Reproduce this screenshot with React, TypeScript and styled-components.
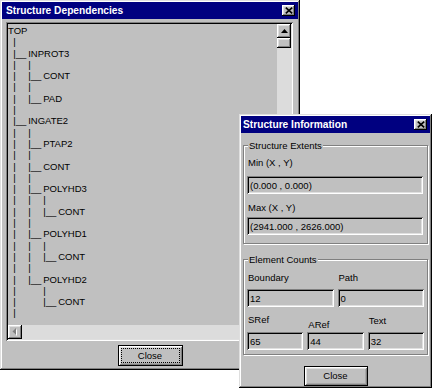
import React from 'react';
import styled, { createGlobalStyle, css } from 'styled-components';

const FACE = '#c0c0c0';

const GlobalStyle = createGlobalStyle`
  html, body { margin: 0; padding: 0; background: #fff; }
  body {
    font-family: "Liberation Sans", Arial, sans-serif;
    font-size: 9.5px;
    color: #000;
  }
  * { box-sizing: border-box; }
`;

const raised = css`
  box-shadow: inset -1px -1px 0 #000, inset 1px 1px 0 #fff,
    inset -2px -2px 0 #808080, inset 2px 2px 0 #dfdfdf;
`;

const frame = css`
  box-shadow: inset -1px -1px 0 #000, inset 1px 1px 0 #dfdfdf,
    inset -2px -2px 0 #808080, inset 2px 2px 0 #fff;
`;

const sunken = css`
  box-shadow: inset 1px 1px 0 #808080, inset -1px -1px 0 #fff,
    inset 2px 2px 0 #000, inset -2px -2px 0 #dfdfdf;
`;

const Desktop = styled.div`
  position: relative;
  width: 434px;
  height: 390px;
  background: #fff;
  overflow: hidden;
`;

const Window = styled.div<{ $x: number; $y: number; $w: number; $h: number }>`
  position: absolute;
  left: ${(p) => p.$x}px;
  top: ${(p) => p.$y}px;
  width: ${(p) => p.$w}px;
  height: ${(p) => p.$h}px;
  background: ${FACE};
  ${frame}
  padding: 2px;
  display: flex;
  flex-direction: column;
`;

const TitleBar = styled.div<{ $indent: number }>`
  flex: none;
  height: 17px;
  background: #000080;
  color: #fff;
  display: flex;
  align-items: center;
  padding: 0 3px 0 ${(p) => p.$indent}px;
  font-weight: bold;
  font-size: 10.2px;
`;

const TitleText = styled.span`
  flex: 1;
  white-space: nowrap;
`;

const CaptionButton = styled.div`
  width: 13px;
  height: 11px;
  background: ${FACE};
  ${raised}
  display: flex;
  align-items: center;
  justify-content: center;
`;

const CloseGlyph = () => (
  <svg width="8" height="7" viewBox="0 0 8 7">
    <path d="M0.8 0.6 L7.2 6.4 M7.2 0.6 L0.8 6.4" stroke="#000" strokeWidth="1.6" />
  </svg>
);

/* ---------- Structure Dependencies ---------- */

const ListBox = styled.div`
  flex: none;
  margin: 3px 0 0 4px;
  width: 287px;
  height: 319px;
  padding: 2px;
  ${sunken}
  display: grid;
  grid-template-columns: 1fr 14px;
  grid-template-rows: 1fr 14px;
`;

const TreeView = styled.div`
  overflow: hidden;
  padding-top: 1px;
`;

const TreeRow = styled.div<{ $root?: boolean }>`
  display: flex;
  height: 11.3px;
  line-height: 11.3px;
  white-space: pre;
  padding-left: ${(p) => (p.$root ? 0 : 5.2)}px;
`;

const Guide = styled.span`
  flex: none;
  width: 15px;
`;

const Branch = styled.span`
  flex: none;
  width: 15px;
`;

const Label = styled.span`
  white-space: nowrap;
`;

const VScroll = styled.div`
  display: flex;
  flex-direction: column;
  background: #dcdcdc;
`;

const HScroll = styled.div`
  display: flex;
  background: #dcdcdc;
`;

const Corner = styled.div`
  background: ${FACE};
`;

const ScrollButton = styled.div`
  flex: none;
  width: 14px;
  height: 14px;
  background: ${FACE};
  ${raised}
  display: flex;
  align-items: center;
  justify-content: center;
`;

const Thumb = styled.div`
  flex: none;
  width: 14px;
  height: 10px;
  background: ${FACE};
  ${raised}
`;

const UpArrow = () => (
  <svg width="7" height="4" viewBox="0 0 7 4">
    <path d="M3.5 0 L7 4 L0 4 Z" fill="#000" />
  </svg>
);

const LeftArrowDisabled = () => (
  <svg width="6" height="9" viewBox="0 0 6 9">
    <path d="M5 1 L5 8 L1.5 4.5 Z" fill="#fff" />
    <path d="M4 0 L4 7 L0.5 3.5 Z" fill="#808080" />
  </svg>
);

const ButtonRow = styled.div<{ $top: number }>`
  flex: none;
  display: flex;
  justify-content: center;
  margin-top: ${(p) => p.$top}px;
`;

const PushButton = styled.div<{ $w: number; $h: number }>`
  width: ${(p) => p.$w}px;
  height: ${(p) => p.$h}px;
  border: 1px solid #000;
  background: ${FACE};
  box-shadow: inset 1px 1px 0 #fff, inset -1px -1px 0 #808080,
    inset 2px 2px 0 #dfdfdf, inset -2px -2px 0 #a8a8a8;
  display: flex;
  align-items: stretch;
  justify-content: center;
  padding: 2px;
  line-height: 1;
`;

const ButtonFace = styled.span<{ $focus?: boolean }>`
  flex: 1;
  display: flex;
  align-items: center;
  justify-content: center;
  border: 1px ${(p) => (p.$focus ? 'dotted #000' : 'solid transparent')};
`;

/* ---------- Structure Information ---------- */

const DialogBody = styled.div`
  flex: 1;
  display: flex;
  flex-direction: column;
  padding: 0 2px;
`;

const Group = styled.fieldset<{ $top: number; $pad: string }>`
  flex: none;
  margin: ${(p) => p.$top}px 0 0 0;
  padding: ${(p) => p.$pad};
  min-width: 0;
  border: 1px solid #808080;
  box-shadow: 1px 1px 0 #fff, inset 1px 1px 0 #fff;
`;

const Legend = styled.legend`
  margin-left: 1px;
  padding: 0 1px;
  line-height: 11px;
  background: ${FACE};
  white-space: nowrap;
`;

const FieldLabel = styled.div<{ $before?: number; $gap: number; $drop?: number }>`
  height: ${(p) => 11 + (p.$drop ?? 0)}px;
  line-height: 11px;
  padding: ${(p) => p.$drop ?? 0}px 0 0 1px;
  margin-top: ${(p) => p.$before ?? 0}px;
  margin-bottom: ${(p) => p.$gap - (p.$drop ?? 0)}px;
  white-space: nowrap;
`;

const Field = styled.div`
  height: 18px;
  padding: 0 3px;
  ${sunken}
  display: flex;
  align-items: center;
  white-space: nowrap;
  overflow: hidden;
`;

const CountRow = styled.div<{ $cols: number; $top?: number }>`
  display: grid;
  grid-template-columns: repeat(${(p) => p.$cols}, 1fr);
  column-gap: 4px;
  margin-top: ${(p) => p.$top ?? 0}px;
`;

const Cell = styled.div`
  display: flex;
  flex-direction: column;
  min-width: 0;
`;

const TREE: Array<[string, string?]> = [
  ['', 'TOP'],
  ['v'],
  ['b', 'INPROT3'],
  ['vv'],
  ['vb', 'CONT'],
  ['vv'],
  ['vb', 'PAD'],
  ['v'],
  ['b', 'INGATE2'],
  ['vv'],
  ['vb', 'PTAP2'],
  ['vv'],
  ['vb', 'CONT'],
  ['vv'],
  ['vb', 'POLYHD3'],
  ['vvv'],
  ['vvb', 'CONT'],
  ['vv'],
  ['vb', 'POLYHD1'],
  ['vvv'],
  ['vvb', 'CONT'],
  ['vv'],
  ['vb', 'POLYHD2'],
  ['vsv'],
  ['vsb', 'CONT'],
  ['v'],
];

export default function App() {
  return (
    <>
      <GlobalStyle />
      <Desktop>
        <Window $x={0} $y={0} $w={300} $h={370}>
          <TitleBar $indent={4}>
            <TitleText>Structure Dependencies</TitleText>
            <CaptionButton>
              <CloseGlyph />
            </CaptionButton>
          </TitleBar>
          <ListBox>
            <TreeView>
              {TREE.map(([toks, label], i) => (
                <TreeRow key={i} $root={toks === ''}>
                  {toks.split('').map((t, j) =>
                    t === 'b' ? (
                      <Branch key={j}>|__</Branch>
                    ) : (
                      <Guide key={j}>{t === 'v' ? '|' : ''}</Guide>
                    )
                  )}
                  {label && <Label>{label}</Label>}
                </TreeRow>
              ))}
            </TreeView>
            <VScroll>
              <ScrollButton>
                <UpArrow />
              </ScrollButton>
              <Thumb />
            </VScroll>
            <HScroll>
              <ScrollButton>
                <LeftArrowDisabled />
              </ScrollButton>
            </HScroll>
            <Corner />
          </ListBox>
          <ButtonRow $top={4}>
            <PushButton $w={65} $h={21}>
              <ButtonFace $focus>Close</ButtonFace>
            </PushButton>
          </ButtonRow>
        </Window>

        <Window $x={239} $y={114} $w={193} $h={274}>
          <TitleBar $indent={2}>
            <TitleText>Structure Information</TitleText>
            <CaptionButton>
              <CloseGlyph />
            </CaptionButton>
          </TitleBar>
          <DialogBody>
            <Group $top={7} $pad="6px 4px 8px 3px">
              <Legend>Structure Extents</Legend>
              <FieldLabel $gap={8}>Min (X , Y)</FieldLabel>
              <Field>(0.000 , 0.000)</Field>
              <FieldLabel $before={8} $gap={4}>Max (X , Y)</FieldLabel>
              <Field>(2941.000 , 2626.000)</Field>
            </Group>
            <Group $top={10} $pad="7px 3px 4px 3px">
              <Legend>Element Counts</Legend>
              <CountRow $cols={2}>
                <Cell>
                  <FieldLabel $gap={6}>Boundary</FieldLabel>
                  <Field>12</Field>
                </Cell>
                <Cell>
                  <FieldLabel $gap={6}>Path</FieldLabel>
                  <Field>0</Field>
                </Cell>
              </CountRow>
              <CountRow $cols={3} $top={7}>
                <Cell>
                  <FieldLabel $gap={7}>SRef</FieldLabel>
                  <Field>65</Field>
                </Cell>
                <Cell>
                  <FieldLabel $gap={7} $drop={5}>ARef</FieldLabel>
                  <Field>44</Field>
                </Cell>
                <Cell>
                  <FieldLabel $gap={7} $drop={1}>Text</FieldLabel>
                  <Field>32</Field>
                </Cell>
              </CountRow>
            </Group>
            <ButtonRow $top={11}>
              <PushButton $w={64} $h={20}>
                <ButtonFace>Close</ButtonFace>
              </PushButton>
            </ButtonRow>
          </DialogBody>
        </Window>
      </Desktop>
    </>
  );
}
